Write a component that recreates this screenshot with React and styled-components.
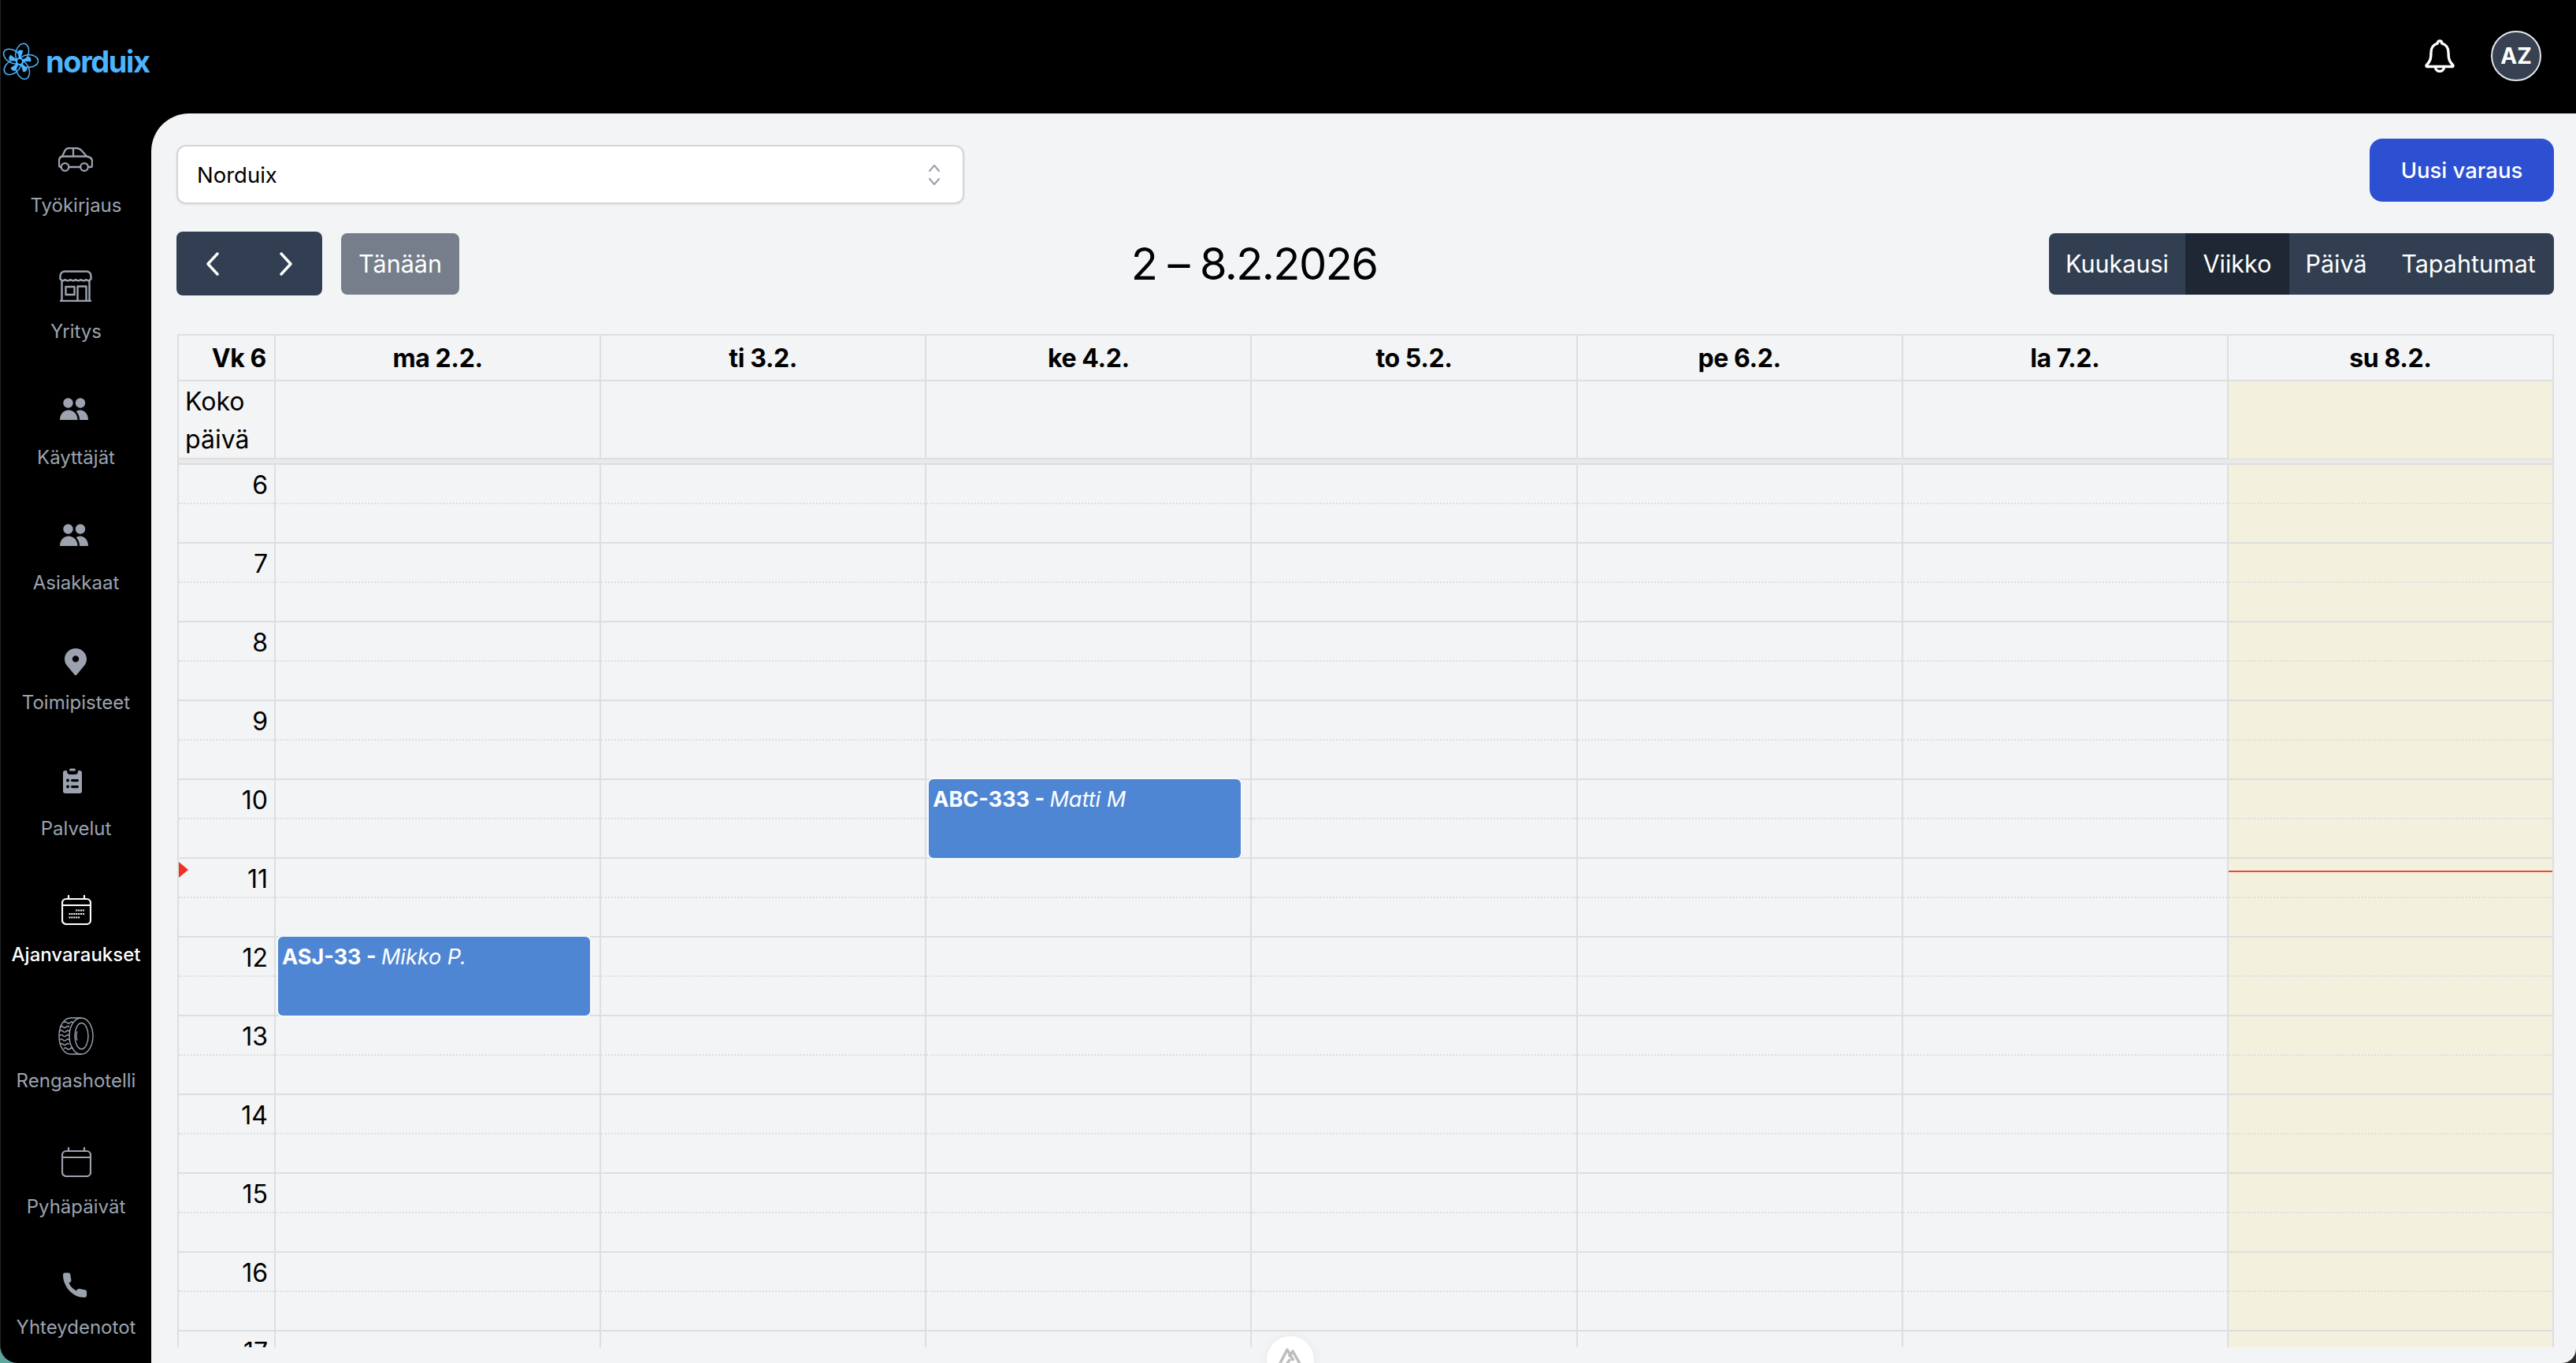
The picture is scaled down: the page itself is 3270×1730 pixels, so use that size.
import React from "react";
import styled, { createGlobalStyle } from "styled-components";

const Global = createGlobalStyle`
  * { box-sizing: border-box; }
  html, body { margin: 0; padding: 0; background: #000; }
  body { font-family: "Inter", "Liberation Sans", sans-serif; color: #000; }
`;

const Desktop = styled.div`
  width: 3270px; height: 1730px; overflow: hidden;
  background: linear-gradient(90deg, #5fa79d 0, #3a4a4a 50%, #2b2b2b 100%);
`;
const Shell = styled.div`
  width: 100%; height: 100%; background: #000; overflow: hidden; border-radius: 0 0 18px 22px;
  border-left: 1px solid #262626;
  display: flex; flex-direction: column; position: relative;
`;
const TopBar = styled.header`
  height: 144px; flex: none; display: flex; align-items: center; justify-content: space-between;
  padding: 0 44px 2px 0;
`;
const Brand = styled.div`display: flex; align-items: center; gap: 9px; margin-top: 14px;`;
const BrandName = styled.span`
  font-size: 38px; font-weight: 700; color: #4db5ff; letter-spacing: -1.4px; line-height: 46px;
`;
const TopActions = styled.div`display: flex; align-items: center; gap: 46px;`;
const Avatar = styled.div`
  width: 64px; height: 64px; border-radius: 50%; border: 2.5px solid #e5e7eb; background: #374151;
  color: #fff; font-weight: 700; font-size: 28px; display: flex; align-items: center; justify-content: center;
`;
const Body = styled.div`flex: 1; display: flex; min-height: 0;`;
const Sidebar = styled.nav`
  width: 191px; flex: none; padding-top: 34px; display: flex; flex-direction: column; align-items: center;
`;
const NavItem = styled.a`
  display: flex; flex-direction: column; align-items: center; margin-bottom: ${p => p.$after}px;
  color: ${p => (p.$active ? "#fff" : "#9ca3af")};
`;
const NavIcon = styled.span`height: 48px; display: flex; align-items: center; justify-content: center; transform: translateX(${p => p.$shift || 0}px);`;
const NavLabel = styled.span`
  margin-top: ${p => p.$gap}px; height: 32px; line-height: 32px; font-size: 24px; white-space: nowrap;
  font-weight: ${p => (p.$active ? 500 : 400)};
`;
const Main = styled.main`
  flex: 1; min-width: 0; background: #f3f4f6; border-top-left-radius: 48px; padding: 32px 28px 0 32px;
  display: flex; flex-direction: column;
`;
const FilterRow = styled.div`display: flex; justify-content: space-between; align-items: flex-start; height: 118px;`;
const SelectBox = styled.div`
  margin-top: 8px; width: 1000px; height: 75px; background: #fff; border: 2px solid #d1d5db; border-radius: 12px;
  box-shadow: 0 1px 3px rgba(0,0,0,.08); display: flex; align-items: center; justify-content: space-between;
  padding: 0 28px 0 24px; font-size: 27.5px;
`;
const PrimaryButton = styled.button`
  width: 234px; height: 80px; border: none; border-radius: 16px; background: #2d4fd1; color: #fff;
  font: 500 27.500px "Inter", sans-serif;
`;
const CalendarBar = styled.div`display: flex; align-items: center; justify-content: space-between; height: 81px; margin-bottom: 49px;`;
const LeftTools = styled.div`display: flex; align-items: center; gap: 24px;`;
const ArrowGroup = styled.div`display: flex; width: 185px; height: 81px; background: #323f52; border-radius: 8px;`;
const ArrowButton = styled.button`
  flex: 1; border: none; background: transparent; display: flex; align-items: center; justify-content: center; padding: 0;
`;
const TodayButton = styled.button`
  width: 150px; height: 78px; border: none; border-radius: 8px; background: #767d8b; color: #fff;
  font: 400 30.500px "Inter", sans-serif;
`;
const Title = styled.h2`margin: 0; font-size: 56px; font-weight: 400; line-height: 68px; letter-spacing: -1.6px;`;
const ViewGroup = styled.div`display: flex; height: 78px; border-radius: 8px; overflow: hidden; background: #323f52;`;
const ViewButton = styled.button`
  width: ${p => p.$w}px; border: none; padding: 0; color: #fff; font: 400 30.500px "Inter", sans-serif;
  background: ${p => (p.$active ? "#1e2733" : "transparent")};
`;
const CalendarClip = styled.div`
  margin-left: 1px; height: 1286px; flex: none; overflow: hidden; border-left: 2px solid #dddee0; border-right: 2px solid #dddee0;
  border-top: 2px solid #dddee0;
`;
const Row = styled.div`
  display: grid; grid-template-columns: 121px repeat(7, 1fr);
  height: ${p => p.$h}px; border-bottom: 2px solid #dddee0;
`;
const HeadCell = styled.div`
  border-left: ${p => (p.$first ? "none" : "2px solid #dddee0")}; font-weight: 700; font-size: 32px; letter-spacing: -0.4px;
  display: flex; align-items: center; justify-content: ${p => (p.$first ? "flex-end" : "center")};
  padding-right: ${p => (p.$first ? "10px" : "0")};
`;
const AllDayLabel = styled.div`font-size: 32px; line-height: 48px; padding: 2px 8px 0 8px;`;
const DayCell = styled.div`
  border-left: 2px solid #dddee0; position: relative; background: ${p => (p.$today ? "#f3f1de" : "transparent")};
`;
const Divider = styled.div`height: 7px; background: #e9e9ea; border-bottom: 2px solid #dddee0;`;
const HourLabel = styled.div`
  position: relative; font-size: 32px; line-height: 40px; text-align: right; padding: 6px 8px 0 0;
  height: 100%;
`;
const HalfLine = styled.div`
  position: absolute; left: 0; right: 0; top: 48px; border-top: 2px dotted #dddee0;
`;
const NowArrow = styled.span`
  position: absolute; left: 0; top: 4px; width: 0; height: 0;
  border-left: 12px solid #ee3324; border-top: 10px solid transparent; border-bottom: 10px solid transparent;
`;
const NowLine = styled.span`position: absolute; left: 0; right: 0; top: 15px; height: 2px; background: #ee4a3c;`;
const Event = styled.div`
  position: absolute; z-index: 2; left: 3px; right: 12px; top: -1px; height: 100px; background: #4f86d3; border-radius: 6px;
  box-shadow: 0 0 0 2px #f7f8fa; color: #fff; font-size: 27px; line-height: 40px; padding: 6px 5px;
  white-space: nowrap; overflow: hidden;
`;
const EventCode = styled.b`font-weight: 700;`;
const EventName = styled.i`font-style: italic;`;
const FloatBadge = styled.div`
  position: absolute; left: 1607px; top: 1696px; width: 60px; height: 60px; border-radius: 50%; background: #fff;
  box-shadow: 0 0 14px rgba(0,0,0,.06); display: flex; justify-content: center; padding-top: 14px;
`;

const gray = "currentColor";
const CarIcon = () => (
  <svg width="44" height="31" viewBox="0 0 44 31" fill="none" stroke={gray} strokeWidth="2.300" strokeLinejoin="round" strokeLinecap="round">
    <path d="M3.500 25H3c-1.300 0-2-.8-2-2v-6c0-3 1.500-5 4-5.500L8 5c1.200-2.700 3-4 6-4h9c3 0 5 1.200 7 3.500l6 7c3.500.6 7 2.500 7 6V23c0 1.200-.8 2-2 2h-2" />
    <path d="M13.500 25h14.500M5 11.500h31M19 1v10.500" />
    <circle cx="8.500" cy="25" r="4.800" />
    <circle cx="33" cy="25" r="4.800" />
  </svg>
);
const StoreIcon = () => (
  <svg width="42" height="40" viewBox="0 0 42 40" fill="none" stroke={gray} strokeWidth="2.400" strokeLinejoin="round">
    <path d="M7 1.500h28c3 0 5.500 2.500 5.500 5.500v4c-2 3-4 2.600-6.100 1-2.400 1.600-4.500 1.600-6.800 0-2.300 1.600-4.500 1.600-6.600 0-2.100 1.600-4.300 1.600-6.600 0-2.300 1.600-4.400 1.600-6.800 0-2.100 1.600-4.100 2-6.100-1V7c0-3 2.500-5.500 5.500-5.500Z" />
    <path d="M3.500 14v25M38.500 14v25M1 39h40" />
    <rect x="8.500" y="21" width="11" height="10" />
    <path d="M23.500 39V20.500h11V39" />
  </svg>
);
const UsersIcon = () => (
  <svg width="36" height="28" viewBox="0 0 36 28" fill="currentColor">
    <circle cx="10.500" cy="6.500" r="6.200" />
    <circle cx="26" cy="6.500" r="6.200" />
    <path d="M0 28c0-7.500 4.700-12.500 11-12.500S22.500 20.500 22.500 28Z" />
    <path d="M25 28c0-4.300-1.500-8-4.300-10.700 1.400-1.100 3-1.800 4.800-1.800C31.500 15.500 36 20.500 36 28Z" />
  </svg>
);
const PinIcon = () => (
  <svg width="28" height="34" viewBox="0 0 28 34" fill="currentColor" fillRule="evenodd">
    <path d="M14 0C6.300 0 0 6 0 13.500c0 3.700 1.500 6.900 4 9.500l8.700 10.400c.7.800 1.900.8 2.600 0L24 23c2.500-2.600 4-5.800 4-9.500C28 6 21.700 0 14 0Zm0 9.200a4.200 4.200 0 1 1 0 8.400 4.200 4.200 0 0 1 0-8.400Z" />
  </svg>
);
const ClipboardIcon = () => (
  <svg width="24" height="32" viewBox="0 0 24 32">
    <rect y="3" width="24" height="29" rx="3" fill="currentColor" />
    <rect x="5" y="0" width="14" height="8" rx="4" fill="#000" />
    <rect x="8" y="0.500" width="8" height="3" rx="1.500" fill="currentColor" />
    <circle cx="6" cy="15.500" r="2" fill="#000" />
    <circle cx="6" cy="23.500" r="2" fill="#000" />
    <rect x="10" y="14" width="10" height="3.200" rx="1.600" fill="#000" />
    <rect x="10" y="22" width="10" height="3.200" rx="1.600" fill="#000" />
  </svg>
);
const dots = [];
[0, 1, 2].forEach(r => [0, 1, 2, 3, 4, 5, 6].forEach(c => {
  if ((r === 0 && c < 3) || (r === 2 && c > 4)) return;
  dots.push(<rect key={`${r}-${c}`} x={9.500 + c * 2.900} y={18.500 + r * 4.500} width="2" height="2" fill="currentColor" />);
}));
const CalendarIcon = ({ withDots }) => (
  <svg width="38" height="38" viewBox="0 0 38 38" fill="none" stroke="currentColor" strokeWidth="2.200" strokeLinecap="round">
    <rect x="1" y="5" width="36" height="32" rx="5" />
    <path d="M1.500 13h35M9 1v4M29 1v4" />
    {withDots && <g stroke="none">{dots}</g>}
  </svg>
);
const TyreIcon = () => (
  <svg width="45" height="48" viewBox="0 0 45 48" fill="none" stroke="currentColor" strokeWidth="1.400">
    <ellipse cx="29" cy="24" rx="15" ry="23" />
    <ellipse cx="29.500" cy="24" rx="8.500" ry="16.500" />
    <path d="M24 29.500c-1.500-3-1.500-8.500 0-11.500" />
    <path d="M29 1H16C7 1 1 11 1 24s6 23 15 23h13" />
    {[6, 11.500, 17, 22.500, 28, 33.500, 39].map(y => (
      <path key={y} d={`M${y < 8 || y > 37 ? 7 : 2} ${y + 1}c1.500-1.500 2.500-1.500 4 0s2.500 1.500 4 0 2.500-1.500 4 0`} />
    ))}
  </svg>
);
const PhoneIcon = () => (
  <svg width="32" height="32" viewBox="0 0 32 32" fill="currentColor">
    <path d="M2.500.500h4.200c1.300 0 2.300.9 2.500 2.100l1.200 7c.2 1-.2 2-1 2.600l-1.800 1.300c1.900 4.500 5 7.700 9.300 9.700l1.400-1.600c.7-.7 1.600-1 2.500-.8l7.300 1.400c1.200.2 2 1.200 2 2.400v4.400c0 1.500-1.100 2.700-2.600 2.700C13.500 32.500 0 19 0 3c0-1.400 1.100-2.500 2.500-2.500Z" />
  </svg>
);
const BellIcon = () => (
  <svg width="38" height="42" viewBox="0 0 38 42" fill="none" stroke="#fff" strokeWidth="3.400" strokeLinecap="round" strokeLinejoin="round">
    <path d="M19 2c1.700 0 2.800 1.200 2.800 3.200C27 6.500 30 11 30 16.500c0 8 1 11.500 5.800 16.300.5.700 0 1.700-.8 1.700H3c-.8 0-1.300-1-.8-1.700C7 28 8 24.500 8 16.500 8 11 11 6.500 16.200 5.200 16.200 3.200 17.300 2 19 2Z" />
    <path d="M13.500 34.500c0 3.800 2.300 6 5.500 6s5.500-2.200 5.500-6" />
  </svg>
);
const LogoMark = () => (
  <svg width="48" height="48" viewBox="0 0 48 48" fill="none" stroke="#4db5ff">
    <g strokeWidth="1.500">
      {[0, 72, 144, 216, 288].map(a => (
        <ellipse key={a} cx="24" cy="12.500" rx="8" ry="12" transform={`rotate(${a + 16} 24 24)`} />
      ))}
    </g>
    <g fill="#4db5ff" stroke="none">
      {[0, 72, 144, 216, 288].map(a => (
        <path key={a} d="M23.500 24L20.500 11Q24.500 8 27.500 10.500Z" transform={`rotate(${a + 4} 24 24)`} />
      ))}
    </g>
    <circle cx="24" cy="24" r="4" fill="#000" strokeWidth="2.200" />
  </svg>
);
const ChevronUpDown = () => (
  <svg width="16" height="28" viewBox="0 0 16 28" fill="none" stroke="#9ca3af" strokeWidth="2.200" strokeLinecap="round" strokeLinejoin="round">
    <path d="M2 9l6-7 6 7M2 19l6 7 6-7" />
  </svg>
);
const Chevron = ({ right }) => (
  <svg width="18" height="30" viewBox="0 0 18 30" fill="none" stroke="#fff" strokeWidth="3.400" strokeLinecap="round" strokeLinejoin="round">
    <path d={right ? "M3 2l12 13L3 28" : "M15 2L3 15l12 13"} />
  </svg>
);
const Mountains = () => (
  <svg width="36" height="24" viewBox="0 0 36 24" fill="none" stroke="#bdbdbd" strokeWidth="3.500" strokeLinejoin="round">
    <path d="M2 26L14 3l8 14M16 12l5-7 12 21M10 26l8-11" />
  </svg>
);

const navItems = [
  { label: "Työkirjaus", icon: <CarIcon />, gap: 19, after: 62 },
  { label: "Yritys", icon: <StoreIcon />, gap: 18, after: 58 },
  { label: "Käyttäjät", icon: <UsersIcon />, gap: 22, after: 58, shift: -2 },
  { label: "Asiakkaat", icon: <UsersIcon />, gap: 21, after: 60, shift: -2 },
  { label: "Toimipisteet", icon: <PinIcon />, gap: 12, after: 59 },
  { label: "Palvelut", icon: <ClipboardIcon />, gap: 21, after: 63, shift: -4 },
  { label: "Ajanvaraukset", icon: <CalendarIcon withDots />, gap: 17, after: 63, active: true },
  { label: "Rengashotelli", icon: <TyreIcon />, gap: 17, after: 63 },
  { label: "Pyhäpäivät", icon: <CalendarIcon />, gap: 17, after: 59 },
  { label: "Yhteydenotot", icon: <PhoneIcon />, gap: 14, after: 0 },
];
const days = ["ma 2.2.", "ti 3.2.", "ke 4.2.", "to 5.2.", "pe 6.2.", "la 7.2.", "su 8.2."];
const hours = [6, 7, 8, 9, 10, 11, 12, 13, 14, 15, 16, 17];
const events = {
  "10-2": ["ABC-333", "Matti M"],
  "12-0": ["ASJ-33", "Mikko P."],
};

export default function App() {
  return (
    <>
      <Global />
      <Desktop>
        <Shell>
          <TopBar>
            <Brand>
              <LogoMark />
              <BrandName>norduix</BrandName>
            </Brand>
            <TopActions>
              <BellIcon />
              <Avatar>AZ</Avatar>
            </TopActions>
          </TopBar>
          <Body>
            <Sidebar>
              {navItems.map(item => (
                <NavItem key={item.label} $after={item.after} $active={item.active}>
                  <NavIcon $shift={item.shift}>{item.icon}</NavIcon>
                  <NavLabel $gap={item.gap} $active={item.active}>{item.label}</NavLabel>
                </NavItem>
              ))}
            </Sidebar>
            <Main>
              <FilterRow>
                <SelectBox>
                  <span>Norduix</span>
                  <ChevronUpDown />
                </SelectBox>
                <PrimaryButton>Uusi varaus</PrimaryButton>
              </FilterRow>
              <CalendarBar>
                <LeftTools>
                  <ArrowGroup>
                    <ArrowButton><Chevron /></ArrowButton>
                    <ArrowButton><Chevron right /></ArrowButton>
                  </ArrowGroup>
                  <TodayButton>Tänään</TodayButton>
                </LeftTools>
                <Title>2 – 8.2.2026</Title>
                <ViewGroup>
                  <ViewButton $w={173}>Kuukausi</ViewButton>
                  <ViewButton $w={132} $active>Viikko</ViewButton>
                  <ViewButton $w={119}>Päivä</ViewButton>
                  <ViewButton $w={217}>Tapahtumat</ViewButton>
                </ViewGroup>
              </CalendarBar>
              <CalendarClip>
                <Row $h={58}>
                  <HeadCell $first>Vk 6</HeadCell>
                  {days.map(d => <HeadCell key={d}>{d}</HeadCell>)}
                </Row>
                <Row $h={99}>
                  <AllDayLabel>Koko päivä</AllDayLabel>
                  {days.map((d, i) => <DayCell key={d} $today={i === 6} />)}
                </Row>
                <Divider />
                {hours.map(h => (
                  <Row key={h} $h={100}>
                    <HourLabel>
                      {h}
                      <HalfLine />
                      {h === 11 && <NowArrow />}
                    </HourLabel>
                    {days.map((d, i) => {
                      const ev = events[`${h}-${i}`];
                      return (
                        <DayCell key={d} $today={i === 6}>
                          <HalfLine />
                          {h === 11 && i === 6 && <NowLine />}
                          {ev && (
                            <Event>
                              <EventCode>{ev[0]} - </EventCode>
                              <EventName>{ev[1]}</EventName>
                            </Event>
                          )}
                        </DayCell>
                      );
                    })}
                  </Row>
                ))}
              </CalendarClip>
            </Main>
          </Body>
          <FloatBadge><Mountains /></FloatBadge>
        </Shell>
      </Desktop>
    </>
  );
}
